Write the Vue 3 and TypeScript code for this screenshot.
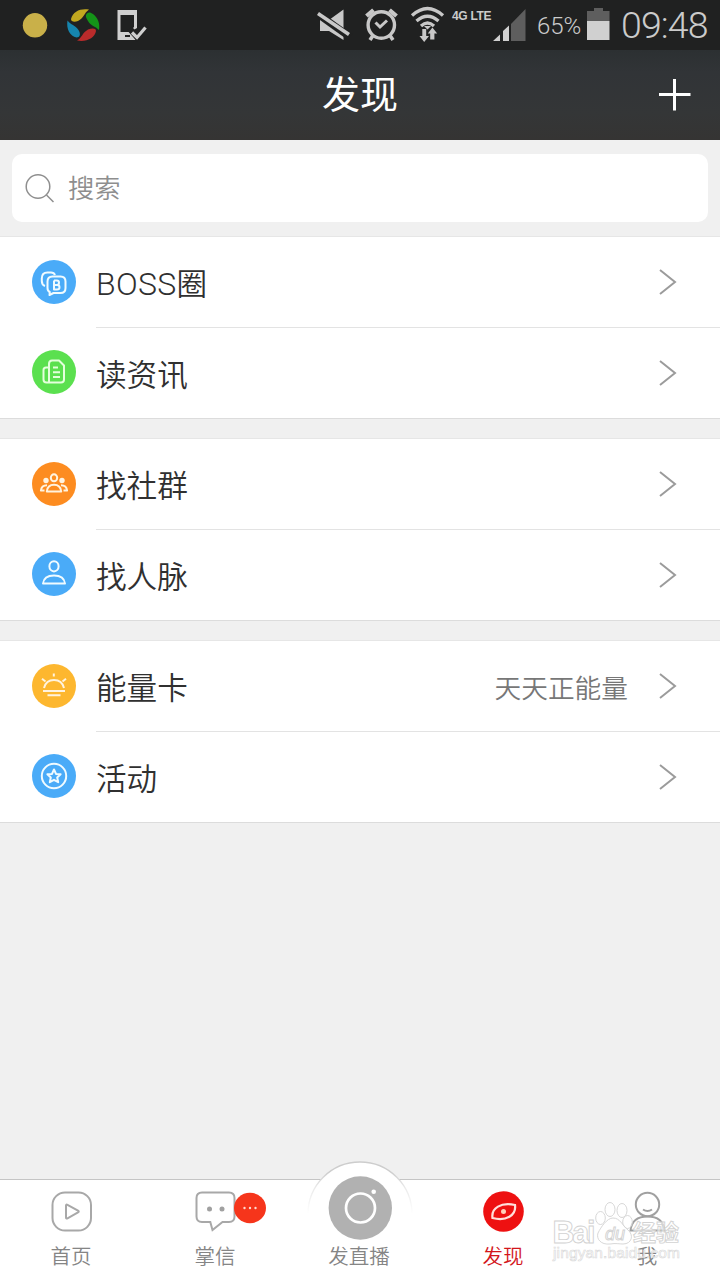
<script setup lang="ts">
interface Item {
  icon: 'boss' | 'news' | 'people' | 'person' | 'sun' | 'star'
  latin?: string
  label: string
  note?: string
}

const groups: Item[][] = [
  [
    { icon: 'boss', latin: 'BOSS', label: '圈' },
    { icon: 'news', label: '读资讯' },
  ],
  [
    { icon: 'people', label: '找社群' },
    { icon: 'person', label: '找人脉' },
  ],
  [
    { icon: 'sun', label: '能量卡', note: '天天正能量' },
    { icon: 'star', label: '活动' },
  ],
]
</script>

<template>
  <div class="screen">
    <div class="status">
      <svg class="notices" width="160" height="50" viewBox="0 0 160 50">
        <circle cx="35" cy="25.300" r="12.200" fill="#c9b049" />
        <path d="M71 19C73 11 81 8 89 9.500C84 13 84 18 78 21C74 22.500 71 21.500 71 19Z" fill="#c2a81f" />
        <path d="M86 15C87 12 90 11.500 93 14C98 18 100 23 99 30C95 26 91 26 88 21C86.500 18.500 85.500 17 86 15Z" fill="#149318" />
        <path d="M96 31C95 38 86 42.500 77 40.500C82 38 82 33 88 29.500C92 28 96 28 96 31Z" fill="#b92b2b" />
        <path d="M76.500 37.500C70 36 66 29 67.500 20.500C71 25 75 25 78.500 30C81 34 80 37.500 76.500 37.500Z" fill="#1685ae" />
        <path fill="#cfcfcf" fill-rule="evenodd" d="M117.500 10H137V28L133.500 30L130 31.500L136 40H117.500ZM120.500 15V32H129L134 27V15Z" />
        <rect x="125" y="35" width="5" height="2" fill="#222" />
        <path d="M129.500 28.500L137 37L147 25.500" fill="none" stroke="#202121" stroke-width="6" />
        <path d="M132 32.500L137 37.500L145.500 27.500" fill="none" stroke="#cfcfcf" stroke-width="3.200" />
      </svg>
      <svg class="radios" width="132" height="50" viewBox="315 0 132 50">
        <g fill="#c8c8c8">
          <path d="M320 20H329L343.500 9.500V40L329 31H320Z" />
          <path d="M315 12L350 37" stroke="#202121" stroke-width="7.500" />
          <path d="M318 13.500L349 34.500" stroke="#c8c8c8" stroke-width="3.600" />
        </g>
        <g fill="none" stroke="#c8c8c8">
          <circle cx="381.300" cy="25" r="13.200" stroke-width="3.400" />
          <path d="M366.500 16L373.500 10M396.500 16L389.500 10" stroke-width="4.200" />
          <path d="M373 35.500L370 40M390 35.500L393 40" stroke-width="3.600" />
          <path d="M375.500 22.500L380 27L387 20.500" stroke-width="3" />
          <path d="M412 15.500Q427.500 1.500 443 15.500M416.500 21Q427.500 11.500 438.500 21M421 26Q427.500 20 434 26" stroke-width="3.300" />
        </g>
        <path fill="#c8c8c8" d="M424 26H431L427.500 29.500ZM422.300 29H426.200V36H429L424.200 42L419.500 36H422.300ZM430.200 39.500V33.500H427.800L432.400 27.500L437.200 33.500H434.400V39.500Z" />
      </svg>
      <span class="lte">4G LTE</span>
      <svg class="signal" width="34" height="50" viewBox="493 0 34 50">
        <path d="M493 41L500 34.500V41ZM503 41V31L509 25.500V41Z" fill="#d0d0d0" />
        <path d="M511 41V24L525.500 9V41Z" fill="#5e5e5e" />
      </svg>
      <span class="percent">65%</span>
      <svg class="battery" width="23" height="50" viewBox="587 0 23 50">
        <path d="M587 21V11H594V8H603V11H609.500V21Z" fill="#5e5e5e" />
        <path d="M587 21H609.500V40H587Z" fill="#d0d0d0" />
      </svg>
      <span class="clock">09:48</span>
    </div>

    <header class="header">
      <h1>发现</h1>
      <svg class="plus" width="32" height="32" viewBox="0 0 32 32">
        <path d="M0 15.500H31.500M15.500 0V31.500" stroke="#fff" stroke-width="3" />
      </svg>
    </header>

    <div class="search-area">
      <div class="search">
        <svg width="30" height="30" viewBox="0 0 30 30" fill="none" stroke="#8f8f8f" stroke-width="1.500">
          <circle cx="13" cy="13.500" r="11.800" />
          <path d="M21.500 22L28.500 29" />
        </svg>
        <span>搜索</span>
      </div>
    </div>

    <main>
      <section v-for="(group, i) in groups" :key="i" class="group">
        <div v-for="item in group" :key="item.label" class="row">
          <svg class="badge" :class="item.icon" width="44" height="44" viewBox="0 0 44 44">
            <circle class="disc" cx="22" cy="22" r="22" />
            <g v-if="item.icon === 'boss'" class="line">
              <path d="M13 26C10.500 25 9.800 23 9.800 21V18.500Q9.800 12.500 15.500 12.500H19Q22 12.500 23 15" />
              <path d="M20.500 16.500H28.500Q33.500 16.500 33.500 21.500V28Q33.500 33 28.500 33H21.500L17.500 35L17.800 32Q15.500 31 15.500 28V21.500Q15.500 16.500 20.500 16.500Z" />
              <path d="M22 20.500V29.500H25Q27.500 29.500 27.500 27.200Q27.500 25 25 25H22M22 20.500H24.800Q27 20.500 27 22.700Q27 25 24.800 25" />
            </g>
            <g v-else-if="item.icon === 'news'" class="line">
              <path d="M17 32.500V14Q17 10.500 20 10.500H27L32 15.500V29.500Q32 32.500 29 32.500H14.500Q11.500 32.500 11.500 29.500V20Q11.500 17.500 14 17.500H17" />
              <path d="M21 17.500H26M21 22.300H28M21 27H28" />
            </g>
            <g v-else-if="item.icon === 'people'" class="line">
              <ellipse cx="22" cy="15.800" rx="3.200" ry="3.500" />
              <path d="M14.800 29.500Q15.500 22.800 22 22.800Q28.500 22.800 29.200 29.500Z" />
              <circle class="solid" cx="14" cy="18.500" r="2.700" />
              <circle class="solid" cx="30" cy="18.500" r="2.700" />
              <path d="M15 23.300Q9.500 23.300 8.900 28.500H12.500M29 23.300Q34.500 23.300 35.100 28.500H31.500" />
            </g>
            <g v-else-if="item.icon === 'person'" class="line">
              <ellipse cx="22" cy="14.300" rx="4.600" ry="5.100" />
              <path d="M11 31.500Q12 23.500 22 23.500Q32 23.500 33 31.500Z" />
            </g>
            <g v-else-if="item.icon === 'sun'" class="line">
              <path d="M12 24Q14 16 22 16Q30 16 32 24M21.800 9.500V12.500M10 14.800L13.500 17.500M34 14.800L30.500 17.500M11 27H33M15.500 31.300H28.500" />
            </g>
            <g v-else class="line">
              <circle cx="22" cy="22" r="12.200" />
              <path d="M22 15.500L24 19.900L28.600 20.300L25.200 23.500L26.200 28.200L22 25.800L17.800 28.200L18.800 23.500L15.400 20.300L20 19.900Z" />
            </g>
          </svg>
          <div class="body">
            <span class="label"><span v-if="item.latin" class="latin">{{ item.latin }}</span>{{ item.label }}</span>
            <span v-if="item.note" class="note">{{ item.note }}</span>
            <svg class="chevron" width="18" height="28" viewBox="0 0 18 28">
              <path d="M1 2L16 14L1 26" fill="none" stroke="#9b9b9b" stroke-width="2" />
            </svg>
          </div>
        </div>
      </section>
    </main>

    <nav class="tabs">
      <div class="tab">
        <svg width="64" height="64" viewBox="0 0 64 64" fill="none" stroke="#a8a8a8" stroke-width="2">
          <rect x="12.500" y="12.500" width="38.500" height="38" rx="12.500" />
          <path d="M26 25.500Q26 24 27.500 24.800L38 30.700Q39.500 31.500 38 32.400L27.500 38.300Q26 39 26 37.500Z" />
        </svg>
        <span>首页</span>
      </div>
      <div class="tab">
        <svg width="64" height="64" viewBox="0 0 64 64">
          <path d="M18 12.500H45Q50.500 12.500 50.500 18V36.500Q50.500 42 45 42H38.500L28.500 50L26.300 42H18Q12.500 42 12.500 36.500V18Q12.500 12.500 18 12.500Z" fill="none" stroke="#a8a8a8" stroke-width="2" />
          <circle cx="25.500" cy="29" r="2.500" fill="#a0a0a0" />
          <circle cx="38" cy="29" r="2.500" fill="#a0a0a0" />
        </svg>
        <svg class="unread" width="32" height="32" viewBox="0 0 32 32">
          <ellipse cx="16" cy="16" rx="16" ry="15.300" fill="#f6351b" />
          <g fill="#ffd9d0"><circle cx="10.500" cy="16" r="1.200" /><circle cx="16" cy="16" r="1.200" /><circle cx="21.500" cy="16" r="1.200" /></g>
        </svg>
        <span>掌信</span>
      </div>
      <div class="tab live">
        <svg class="hump" width="108" height="60" viewBox="0 0 108 60">
          <defs>
            <linearGradient id="rim" x1="0" y1="0" x2="0" y2="1">
              <stop offset="0.200" stop-color="#cdcdcd" />
              <stop offset="0.500" stop-color="#eaeaea" />
              <stop offset="1" stop-color="#fff" />
            </linearGradient>
          </defs>
          <path d="M2 56V53A52 52 0 0 1 106 53V56Z" fill="#fff" />
          <path d="M2 53A52 52 0 0 1 106 53" fill="none" stroke="url(#rim)" stroke-width="1.300" />
        </svg>
        <svg class="lens" width="64" height="64" viewBox="0 0 64 64">
          <circle cx="32.300" cy="32" r="31.700" fill="#b1b1b1" />
          <circle cx="32.500" cy="32" r="14.500" fill="none" stroke="#fff" stroke-width="2.700" />
          <circle cx="45.700" cy="15.800" r="2.300" fill="#fff" />
        </svg>
        <span>发直播</span>
      </div>
      <div class="tab active">
        <svg width="64" height="64" viewBox="0 0 64 64">
          <circle cx="31.500" cy="31.500" r="20.300" fill="#ee1111" />
          <path d="M20.500 38C19 28 29 22 43 25C44.500 35.500 34 41.500 20.500 38Z" fill="none" stroke="#ffe0dc" stroke-width="2.200" />
          <circle cx="31.500" cy="31.500" r="2.500" fill="#ffd0ba" />
        </svg>
        <span>发现</span>
      </div>
      <div class="tab">
        <svg width="64" height="64" viewBox="0 0 64 64" fill="none" stroke="#a0a0a0" stroke-width="2">
          <circle cx="31.500" cy="24.500" r="11.700" />
          <path d="M27 29.500Q31.500 32.500 36 29.500M14.500 50.500Q16 36.500 31.500 36.500Q47 36.500 48.500 50.500Z" />
        </svg>
        <span>我</span>
      </div>
    </nav>

    <svg class="watermark" width="136" height="72" viewBox="0 0 136 72">
      <g fill="#fff" fill-opacity="0.600" stroke="#d2d2d2" stroke-width="0.900">
        <text x="2.500" y="44.500" font-size="30.500" font-weight="700" textLength="43">Bai</text>
        <ellipse cx="50.500" cy="20" rx="4.800" ry="6.500" />
        <ellipse cx="60" cy="11.500" rx="5" ry="7" />
        <ellipse cx="72" cy="12.500" rx="5" ry="7" />
        <ellipse cx="77.500" cy="24" rx="4.800" ry="6.500" />
        <path d="M63 20C70 20 72 27 78 32C84 37 82 46 73 46C69 46 66 45 60 46C51 47 46 41 48 35C51 29 57 20 63 20Z" />
        <text x="55" y="41.500" font-size="18" font-style="italic">du</text>
        <text x="83" y="43" font-size="23" font-weight="700">经验</text>
        <text x="3" y="60" font-size="15.500" textLength="127" stroke-width="0.600" stroke="#d8d8d8">jingyan.baidu.com</text>
      </g>
    </svg>
  </div>
</template>

<style>
body {
  margin: 0;
  background: #f0f0f0;
}
</style>

<style scoped>
.screen {
  position: relative;
  width: 720px;
  height: 1280px;
  display: flex;
  flex-direction: column;
  overflow: hidden;
  background: #f0f0f0;
  color: #303030;
  font-family: Roboto, "Noto Sans CJK SC", sans-serif;
  font-weight: 350;
}
svg {
  display: block;
  flex: none;
}
.status {
  height: 50px;
  display: flex;
  align-items: center;
  background: #202121;
  color: #cbcbcb;
  white-space: nowrap;
}
.radios {
  margin-left: 155px;
}
.lte {
  width: 41px;
  margin: 0 0 18px 5px;
  font: 700 12px/14px "Liberation Sans", sans-serif;
  letter-spacing: -0.3px;
}
.percent {
  width: 44px;
  margin: 2px 0 0 10px;
  font-size: 24px;
  font-weight: 350;
  letter-spacing: -0.1px;
}
.battery {
  margin-left: 6px;
}
.clock {
  margin-left: 11px;
  font-size: 37.5px;
  font-weight: 300;
  letter-spacing: -0.9px;
}
.header {
  height: 90px;
  display: grid;
  grid-template-columns: 1fr auto 1fr;
  align-items: center;
  background: linear-gradient(#2c3032, #313437 25%, #343637 70%, #353433);
  color: #fff;
}
.header h1 {
  grid-column: 2;
  margin: 0;
  font-size: 38px;
  line-height: 56px;
  font-weight: 400;
}
.plus {
  justify-self: end;
  margin-right: 29px;
}
.search-area {
  padding: 14px 12px;
}
.search {
  height: 68px;
  display: flex;
  align-items: center;
  gap: 13px;
  padding: 0 0 2px 13px;
  box-sizing: border-box;
  border-radius: 10px;
  background: #fff;
  color: #8e8e8e;
  font-size: 26.3px;
}
.search svg {
  margin-top: 1px;
}
.search span {
  margin-bottom: 1px;
}
main {
  display: flex;
  flex-direction: column;
  gap: 19px;
}
.group {
  border-top: 1px solid #e6e6e6;
  border-bottom: 1px solid #dcdcdc;
  background: #fff;
}
.row {
  height: 90px;
  display: flex;
  align-items: center;
  gap: 20px;
  padding-left: 32px;
}
.row:first-child {
  height: 91px;
}
.badge {
  margin-bottom: 2px;
}
.body {
  flex: 1;
  height: 100%;
  display: flex;
  align-items: center;
  padding-right: 43px;
  box-sizing: border-box;
}
.row:first-child .body {
  border-bottom: 1px solid #e3e3e3;
}
.label {
  flex: 1;
  font-size: 30.6px;
}
.latin {
  font-size: 32px;
  font-weight: 350;
  letter-spacing: 0.3px;
}
.note {
  margin-right: 31px;
  color: #777;
  font-size: 26.7px;
}
.disc {
  fill: #4aabf8;
}
.news .disc {
  fill: #5be04f;
}
.people .disc {
  fill: #fd8c20;
}
.sun .disc {
  fill: #fdb72f;
}
.line {
  fill: none;
  stroke: #f0fbff;
  stroke-width: 2;
  stroke-linejoin: round;
}
.news .line {
  stroke: #e4ffdc;
}
.people .line,
.sun .line {
  stroke: #fff3df;
}
.line .solid {
  fill: #fff3df;
  stroke: none;
}
.tabs {
  height: 101px;
  margin-top: auto;
  display: flex;
  box-sizing: border-box;
  border-top: 1px solid #c5c5c5;
  background: #fff;
}
.tab {
  position: relative;
  flex: 1;
  display: flex;
  flex-direction: column;
  align-items: center;
  color: #858585;
  font-size: 20.5px;
  line-height: 27px;
}
.tab span {
  position: relative;
  margin-right: 2px;
}
.tab.active {
  color: #d3161c;
}
.unread {
  position: absolute;
  left: 90px;
  top: 12px;
}
.hump {
  position: absolute;
  left: 18px;
  top: -19px;
}
.lens {
  position: relative;
  margin: -4px 0 4px;
}
.watermark {
  position: absolute;
  left: 550px;
  top: 1198px;
  font-family: "Liberation Sans", "Noto Sans CJK SC", sans-serif;
}
</style>
